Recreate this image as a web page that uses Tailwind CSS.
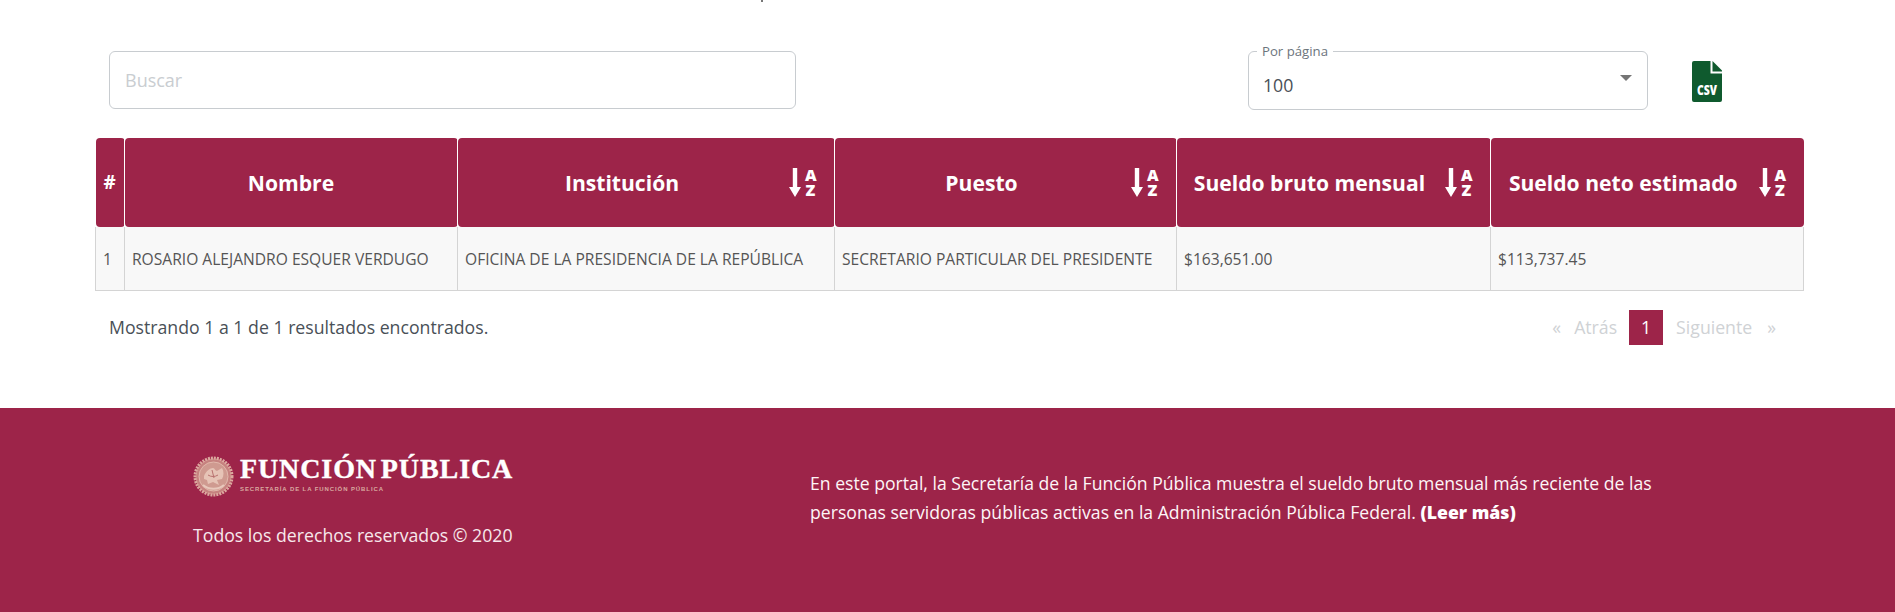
<!DOCTYPE html>
<html lang="es">
<head>
    <meta charset="UTF-8">
    <title>Sueldos</title>
    <script src="https://cdn.jsdelivr.net/npm/@tailwindcss/browser@4"></script>
</head>
<body class="relative bg-white font-['Open_Sans',sans-serif] text-[#495057] overflow-hidden h-[612px]">
    <!-- descender of the heading cut off by the top of the screenshot -->
    <div class="absolute left-[761px] top-0 w-[2px] h-[2px] bg-[#777]"></div>

    <div class="h-[408px] px-[95px] pt-[51px] w-[1895px]">
        <!-- Filters -->
        <div class="flex items-start h-[87px] pl-[14px]">
            <input placeholder="Buscar" class="w-[687px] h-[58px] border border-[#c8ccd0] rounded-md px-[15px] text-[18px] placeholder:text-[#c9cdd1] bg-white">
            <div class="relative w-[400px] h-[59px] ml-[452px] border border-[#c8ccd0] rounded-md bg-white">
                <span class="absolute -top-[9px] left-[8px] px-[5px] bg-white text-[13.2px] leading-[17px] text-[#6c757d]">Por página</span>
                <span class="absolute left-[14px] top-[21px] text-[17.7px] leading-[24px] text-[#495057]">100</span>
                <span class="absolute right-[15px] top-[23px] w-0 h-0 border-x-[6px] border-x-transparent border-t-[6px] border-t-[#757575]"></span>
            </div>
            <svg class="ml-[44px] mt-[10px]" width="30" height="41" viewBox="0 0 30 41">
                <path d="M2 0H18.500V12.500H30V39a2 2 0 0 1-2 2H2a2 2 0 0 1-2-2V2a2 2 0 0 1 2-2Z" fill="#0f5a2e"/>
                <path d="M20.500 0 30 9.500V10.500H20.500Z" fill="#0f5a2e"/>
                <text x="15" y="34" text-anchor="middle" font-family="Open Sans" font-weight="800" font-size="14.500" fill="#fff" textLength="20" lengthAdjust="spacingAndGlyphs">CSV</text>
            </svg>
        </div>

        <!-- Table -->
        <table class="table-fixed w-[1708px] border-collapse">
            <colgroup>
                <col class="w-[29px]"><col class="w-[333px]"><col class="w-[377px]"><col class="w-[342px]"><col class="w-[314px]"><col class="w-[313px]">
            </colgroup>
            <thead>
                <tr class="h-[89px] text-white text-[21.1px] font-bold">
                    <th class="bg-[#9d2449] rounded-[4px] p-0 text-center text-[19px]">#</th>
                    <th class="bg-[#9d2449] rounded-[4px] border-l border-white p-0 text-center">Nombre</th>
                    <th class="bg-[#9d2449] rounded-[4px] border-l border-white p-0">
                        <div class="flex items-center pl-[15px] pr-[18px]"><span class="flex-1 text-center mr-[18px]">Institución</span>
                            <svg width="12" height="29" viewBox="0 0 12 29" fill="#fff"><path d="M3.800 0h4.400v19H12l-6 10-6-10h3.800Z"/></svg>
                            <div class="flex flex-col w-[15px] pl-[4px] mt-[1px] text-[16px] leading-[15px] font-extrabold text-center"><span>A</span><span>Z</span></div>
                        </div>
                    </th>
                    <th class="bg-[#9d2449] rounded-[4px] border-l border-white p-0">
                        <div class="flex items-center pl-[15px] pr-[18px]"><span class="flex-1 text-center mr-[18px]">Puesto</span>
                            <svg width="12" height="29" viewBox="0 0 12 29" fill="#fff"><path d="M3.800 0h4.400v19H12l-6 10-6-10h3.800Z"/></svg>
                            <div class="flex flex-col w-[15px] pl-[4px] mt-[1px] text-[16px] leading-[15px] font-extrabold text-center"><span>A</span><span>Z</span></div>
                        </div>
                    </th>
                    <th class="bg-[#9d2449] rounded-[4px] border-l border-white p-0">
                        <div class="flex items-center pl-[15px] pr-[18px]"><span class="flex-1 text-center mr-[18px] whitespace-nowrap">Sueldo bruto mensual</span>
                            <svg width="12" height="29" viewBox="0 0 12 29" fill="#fff"><path d="M3.800 0h4.400v19H12l-6 10-6-10h3.800Z"/></svg>
                            <div class="flex flex-col w-[15px] pl-[4px] mt-[1px] text-[16px] leading-[15px] font-extrabold text-center"><span>A</span><span>Z</span></div>
                        </div>
                    </th>
                    <th class="bg-[#9d2449] rounded-[4px] border-l border-white p-0">
                        <div class="flex items-center pl-[15px] pr-[18px]"><span class="flex-1 text-center mr-[18px] whitespace-nowrap">Sueldo neto estimado</span>
                            <svg width="12" height="29" viewBox="0 0 12 29" fill="#fff"><path d="M3.800 0h4.400v19H12l-6 10-6-10h3.800Z"/></svg>
                            <div class="flex flex-col w-[15px] pl-[4px] mt-[1px] text-[16px] leading-[15px] font-extrabold text-center"><span>A</span><span>Z</span></div>
                        </div>
                    </th>
                </tr>
            </thead>
            <tbody>
                <tr class="h-[63px] bg-[#f8f8f8] text-[15.6px] text-[#555]">
                    <td class="border border-[#d4d4d4] border-t-0 px-[7px] pt-[3px]">1</td>
                    <td class="border border-[#d4d4d4] border-t-0 px-[7px] pt-[3px] whitespace-nowrap">ROSARIO ALEJANDRO ESQUER VERDUGO</td>
                    <td class="border border-[#d4d4d4] border-t-0 px-[7px] pt-[3px] whitespace-nowrap">OFICINA DE LA PRESIDENCIA DE LA REPÚBLICA</td>
                    <td class="border border-[#d4d4d4] border-t-0 px-[7px] pt-[3px] whitespace-nowrap">SECRETARIO PARTICULAR DEL PRESIDENTE</td>
                    <td class="border border-[#d4d4d4] border-t-0 px-[7px] pt-[3px]">$163,651.00</td>
                    <td class="border border-[#d4d4d4] border-t-0 px-[7px] pt-[3px]">$113,737.45</td>
                </tr>
            </tbody>
        </table>

        <!-- Results and pagination -->
        <div class="flex items-center justify-between mt-[19px] pl-[14px] pr-[24px] h-[35px]">
            <p class="text-[17.7px] text-[#495057]">Mostrando 1 a 1 de 1 resultados encontrados.</p>
            <div class="flex items-center text-[17.7px] text-[#cfd2d5]">
                <span>«</span>
                <span class="ml-[13px]">Atrás</span>
                <span class="ml-[12px] w-[34px] h-[35px] bg-[#9d2449] text-white flex items-center justify-center">1</span>
                <span class="ml-[13px]">Siguiente</span>
                <span class="ml-[15px]">»</span>
            </div>
        </div>
    </div>

    <!-- Footer -->
    <footer class="h-[204px] bg-[#9d2449] text-white flex pl-[193px]">
        <div class="w-[617px] pt-[48px]">
            <div class="flex items-start h-[64px]">
                <svg width="41" height="41" viewBox="0 0 41 41" class="shrink-0">
                    <circle cx="20.500" cy="20.500" r="18" fill="#c6827f"/>
                    <circle cx="20.500" cy="20.500" r="18.500" fill="none" stroke="#dca99f" stroke-width="3" stroke-dasharray="2 1"/>
                    <circle cx="20.500" cy="20.500" r="14.500" fill="#cf9a90" stroke="#e2b8ac" stroke-width="1"/>
                    <path d="M11 20c2-5 6-8 9-8 2 0 2 3 4 3l5-3c2 3 2 8 0 11l-5 1 2 5-6-3-5 2-1-4-3-1Z" fill="#e6c3b6"/>
                    <path d="M10 29c6 5 15 5 21 0" fill="none" stroke="#e8c8bc" stroke-width="2"/>
                    <path d="M15 19c3 2 7 2 10 0M19 14l2 8" fill="none" stroke="#b8716f" stroke-width="1"/>
                </svg>
                <div class="ml-[6px] -mt-[3px]">
                    <div class="font-['Liberation_Serif',serif] font-bold text-[28px] leading-[32px] whitespace-nowrap tracking-[0.9px] [word-spacing:-4px] [-webkit-text-stroke:0.4px_white]">FUNCIÓN PÚBLICA</div>
                    <div class="font-['Liberation_Sans',sans-serif] font-bold text-[6px] leading-[8px] tracking-[0.9px] text-[#d9aaa0] whitespace-nowrap">SECRETARÍA DE LA FUNCIÓN PÚBLICA</div>
                </div>
            </div>
            <p class="text-[17.7px] leading-[24px] text-[#f7e8ec] mt-[3px]">Todos los derechos reservados © 2020</p>
        </div>
        <p class="w-[860px] pt-[61px] text-[17.64px] leading-[28.500px] text-[#fdf5f7]">En este portal, la Secretaría de la Función Pública muestra el sueldo bruto mensual más reciente de las personas servidoras públicas activas en la Administración Pública Federal. <b class="font-extrabold text-white">(Leer más)</b></p>
    </footer>
</body>
</html>
